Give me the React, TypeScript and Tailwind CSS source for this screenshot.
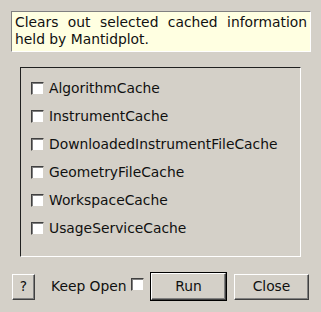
import React from "react";

const caches = [
  "AlgorithmCache",
  "InstrumentCache",
  "DownloadedInstrumentFileCache",
  "GeometryFileCache",
  "WorkspaceCache",
  "UsageServiceCache",
];

function CheckBox() {
  return (
    <span className="inline-block w-[13px] h-[13px] shrink-0 bg-white border border-t-[#404040] border-l-[#404040] border-b-[#d4d0c8] border-r-[#d4d0c8] shadow-[inset_1px_1px_0_#808080]" />
  );
}

function Button({ label, width, isDefault }: { label: string; width: string; isDefault?: boolean }) {
  const bevel =
    "flex items-center justify-center bg-[#d4d0c8] border border-t-white border-l-white border-b-[#404040] border-r-[#404040] shadow-[inset_-1px_-1px_0_#808080]";
  if (isDefault) {
    return (
      <div className={`${width} h-[29px] border border-black flex`}>
        <div className={`${bevel} flex-1`}>{label}</div>
      </div>
    );
  }
  return <div className={`${bevel} ${width} h-[26px]`}>{label}</div>;
}

export default function App() {
  return (
    <div className="w-[321px] h-[312px] bg-[#d4d0c8] text-[13.85px] text-[#101010] font-['DejaVu_Sans',sans-serif] flex flex-col">
      {/* Description */}
      <div className="mt-[11px] ml-[11px] w-[300px] h-[41px] bg-[#ffffe1] border border-t-[#808080] border-l-[#808080] border-b-white border-r-white px-[3px] pt-[2px] leading-[17px] text-justify">
        Clears out selected cached information held by Mantidplot.
      </div>

      {/* Cache list */}
      <div className="mt-[15px] ml-[20px] w-[281px] h-[190px] border border-t-[#202020] border-l-[#202020] border-b-white border-r-white pl-[10px] pt-[14px] flex flex-col gap-[15px]">
        {caches.map((c) => (
          <label key={c} className="flex items-center gap-[5px] h-[13px] leading-[13px]">
            <CheckBox />
            <span>{c}</span>
          </label>
        ))}
      </div>

      {/* Buttons */}
      <div className="mt-[15px] ml-[12px] flex items-center">
        <Button label="?" width="w-[23px]" />
        <span className="ml-[16px] w-[75px] whitespace-nowrap">Keep Open</span>
        <span className="ml-[5px]">
          <CheckBox />
        </span>
        <span className="ml-[6px]">
          <Button label="Run" width="w-[77px]" isDefault />
        </span>
        <span className="ml-[7px]">
          <Button label="Close" width="w-[75px]" />
        </span>
      </div>
    </div>
  );
}
